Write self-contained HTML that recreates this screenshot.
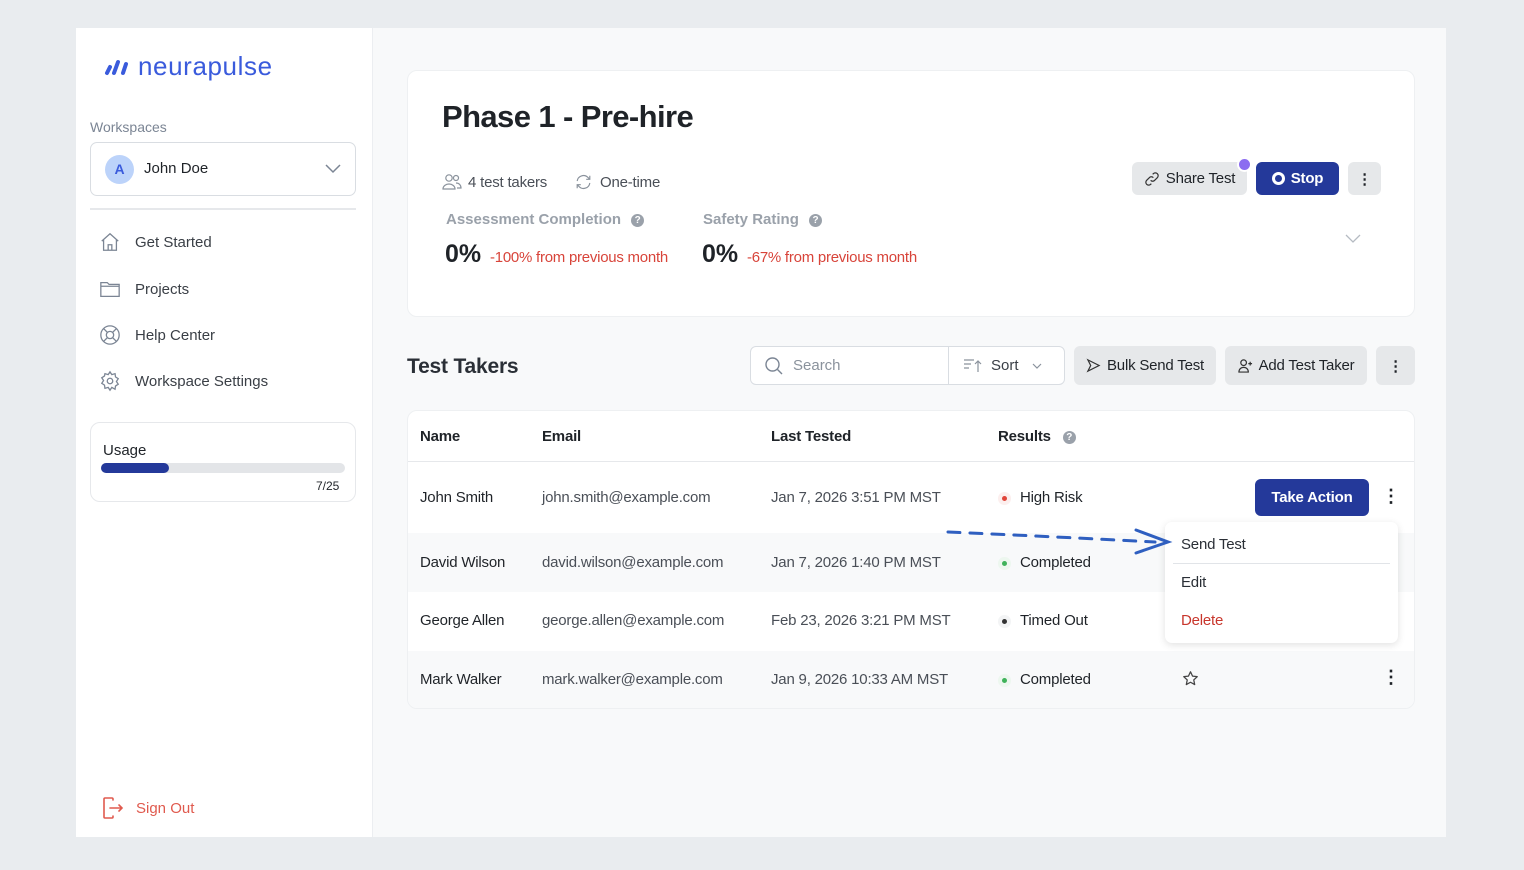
<!DOCTYPE html>
<html><head><meta charset="utf-8"><style>
*{margin:0;padding:0;box-sizing:border-box}
body{width:1524px;height:870px;background:#e9ecef;font-family:"Liberation Sans",Arial,sans-serif;position:relative;overflow:hidden;color:#1f2328}
.a{position:absolute}
.side{left:76px;top:28px;width:297px;height:809px;background:#fff;border-right:1px solid #eceef1}
.main{left:373px;top:28px;width:1073px;height:809px;background:#f8f9fa}
.card{background:#fff;border:1px solid #eef0f2;border-radius:10px}
.btn{background:#e6e8ea;border-radius:6px;font-size:15px;display:flex;align-items:center;justify-content:center;gap:6px;color:#1f2328;letter-spacing:-0.2px}
.nav{font-size:15px;color:#3a3f46;display:flex;align-items:center;gap:14px;left:99px}
.td{font-size:15px;color:#1f2328;letter-spacing:-0.2px}
.em{color:#4a4f57}
.dot{display:inline-block;width:5px;height:5px;border-radius:50%;margin-right:13px;vertical-align:middle;box-shadow:0 0 0 4px #f4f6f5}
</style></head><body>
<div class="a side"></div>
<div class="a main"></div>

<!-- logo -->
<svg class="a" style="left:104px;top:57px" width="28" height="20" viewBox="0 0 28 20"><g stroke="#3a5bdc" stroke-width="4" stroke-linecap="round"><line x1="3" y1="16" x2="6" y2="10"/><line x1="10" y1="16" x2="14" y2="5"/><line x1="19" y1="16" x2="22" y2="7"/></g></svg>
<div class="a" style="left:138px;top:51px;font-size:26px;color:#3a5bdc;font-weight:500;letter-spacing:0.6px">neurapulse</div>

<div class="a" style="left:90px;top:119px;font-size:14px;color:#7b8594">Workspaces</div>
<div class="a" style="left:90px;top:142px;width:266px;height:54px;border:1px solid #d9dde2;border-radius:7px"></div>
<div class="a" style="left:105px;top:155px;width:29px;height:29px;border-radius:50%;background:#bcd3fa;color:#3a5bdc;font-size:14px;font-weight:bold;text-align:center;line-height:29px">A</div>
<div class="a" style="left:144px;top:160px;font-size:15px">John Doe</div>
<svg class="a" style="left:325px;top:164px" width="16" height="10"><path d="M1 1l7 7 7-7" fill="none" stroke="#7b8594" stroke-width="1.5"/></svg>
<div class="a" style="left:90px;top:208px;width:266px;height:2px;background:#e6e8eb"></div>

<div class="a nav" style="top:231px"><svg width="22" height="22" viewBox="0 0 24 24" fill="none" stroke="#7b8594" stroke-width="1.4"><path d="M3 11l9-8 9 8M5 9v12h14V9M10 21v-6h4v6"/></svg>Get Started</div>
<div class="a nav" style="top:278px"><svg width="22" height="22" viewBox="0 0 24 24" fill="none" stroke="#7b8594" stroke-width="1.4"><path d="M2 5h7l2 2h11v13H2zM2 9h20"/></svg>Projects</div>
<div class="a nav" style="top:324px"><svg width="22" height="22" viewBox="0 0 24 24" fill="none" stroke="#7b8594" stroke-width="1.4"><circle cx="12" cy="12" r="10"/><circle cx="12" cy="12" r="4"/><path d="M5 5l4 4M19 5l-4 4M5 19l4-4M19 19l-4-4"/></svg>Help Center</div>
<div class="a nav" style="top:370px"><svg width="22" height="22" viewBox="0 0 24 24" fill="none" stroke="#7b8594" stroke-width="1.4"><circle cx="12" cy="12" r="3"/><path d="M12 2l2 3 3.5-1 .5 3.5 3 2-2 3 2 3-3 2-.5 3.5L14 19l-2 3-2-3-3.5 1L6 16.5l-3-2 2-3-2-3 3-2L6.5 4 10 5z"/></svg>Workspace Settings</div>

<div class="a card" style="left:90px;top:422px;width:266px;height:80px;border-color:#e6e8eb"></div>
<div class="a" style="left:103px;top:442px;font-size:15px">Usage</div>
<div class="a" style="left:101px;top:463px;width:244px;height:10px;border-radius:5px;background:#e3e5e8"></div>
<div class="a" style="left:101px;top:463px;width:68px;height:10px;border-radius:5px;background:#24399a"></div>
<div class="a" style="left:316px;top:479px;font-size:12px">7/25</div>

<svg class="a" style="left:101px;top:796px" width="24" height="24" viewBox="0 0 24 24" fill="none" stroke="#e05a4e" stroke-width="1.6" stroke-linecap="round"><path d="M12 4V3a1 1 0 0 0-1-1H4a1 1 0 0 0-1 1v18a1 1 0 0 0 1 1h7a1 1 0 0 0 1-1v-1M9 12h12M18 9l3 3-3 3"/></svg>
<div class="a" style="left:136px;top:800px;font-size:15px;color:#e05a4e">Sign Out</div>

<!-- top card -->
<div class="a card" style="left:407px;top:70px;width:1008px;height:247px"></div>
<div class="a" style="left:442px;top:99px;font-size:31px;font-weight:bold;letter-spacing:-0.6px">Phase 1 - Pre-hire</div>
<svg class="a" style="left:442px;top:173px" width="20" height="18" viewBox="0 0 20 18" fill="none" stroke="#8a929c" stroke-width="1.2"><circle cx="7" cy="5" r="3.2"/><path d="M1 16c0-3 3-5 6-5s6 2 6 5z"/><circle cx="14" cy="5" r="2.5"/><path d="M14 10c3 0 5 2 5 5h-4"/></svg>
<div class="a" style="left:468px;top:174px;font-size:15px;color:#4a4f57;letter-spacing:-0.2px">4 test takers</div>
<svg class="a" style="left:574px;top:173px" width="19" height="18" viewBox="0 0 20 20" fill="none" stroke="#8a929c" stroke-width="1.3"><path d="M3 9a7 7 0 0 1 12-4l2 2M17 11a7 7 0 0 1-12 4l-2-2M17 3v4h-4M3 17v-4h4"/></svg>
<div class="a" style="left:600px;top:174px;font-size:15px;color:#4a4f57;letter-spacing:-0.2px">One-time</div>
<div class="a" style="left:446px;top:211px;font-size:15px;font-weight:bold;color:#9aa1aa">Assessment Completion <span style="display:inline-block;width:13px;height:13px;border-radius:50%;background:#9aa1aa;color:#fff;font-size:10px;text-align:center;line-height:13px;margin-left:6px;vertical-align:1px">?</span></div>
<div class="a" style="left:703px;top:211px;font-size:15px;font-weight:bold;color:#9aa1aa">Safety Rating <span style="display:inline-block;width:13px;height:13px;border-radius:50%;background:#9aa1aa;color:#fff;font-size:10px;text-align:center;line-height:13px;margin-left:6px;vertical-align:1px">?</span></div>
<div class="a" style="left:445px;top:240px;font-size:25px;font-weight:bold">0%</div>
<div class="a" style="left:490px;top:249px;font-size:15px;color:#d8443a;letter-spacing:-0.25px">-100% from previous month</div>
<div class="a" style="left:702px;top:240px;font-size:25px;font-weight:bold">0%</div>
<div class="a" style="left:747px;top:249px;font-size:15px;color:#d8443a;letter-spacing:-0.25px">-67% from previous month</div>
<div class="a btn" style="left:1132px;top:162px;width:115px;height:33px"><svg width="16" height="16" viewBox="0 0 24 24" fill="none" stroke="#333" stroke-width="1.8"><path d="M10 14a4 4 0 0 0 6 0l4-4a4 4 0 0 0-6-6l-1 1M14 10a4 4 0 0 0-6 0l-4 4a4 4 0 0 0 6 6l1-1"/></svg>Share Test</div>
<div class="a" style="left:1237px;top:157px;width:15px;height:15px;border-radius:50%;background:#8b6cf0;border:2px solid #fff"></div>
<div class="a btn" style="left:1256px;top:162px;width:83px;height:33px;background:#24399a;color:#fff;font-weight:bold"><span style="display:inline-block;width:13px;height:13px;border-radius:50%;border:3.5px solid #fff"></span>Stop</div>
<div class="a btn" style="left:1348px;top:162px;width:33px;height:33px;font-weight:bold">⋮</div>
<svg class="a" style="left:1345px;top:234px" width="16" height="10"><path d="M1 1l7 7 7-7" fill="none" stroke="#b5bbc2" stroke-width="1.3"/></svg>

<!-- toolbar -->
<div class="a" style="left:407px;top:355px;font-size:21px;font-weight:bold;color:#2a2f36;letter-spacing:-0.2px">Test Takers</div>
<div class="a" style="left:750px;top:346px;width:315px;height:39px;background:#fff;border:1px solid #d9dde2;border-radius:6px"></div>
<div class="a" style="left:948px;top:347px;width:1px;height:37px;background:#d9dde2"></div>
<svg class="a" style="left:764px;top:356px" width="20" height="20" viewBox="0 0 20 20" fill="none" stroke="#7b8594" stroke-width="1.4"><circle cx="8.5" cy="8.5" r="6.5"/><path d="M13.5 13.5L18 18"/></svg>
<div class="a" style="left:793px;top:357px;font-size:15px;color:#8a929c">Search</div>
<svg class="a" style="left:963px;top:357px" width="20" height="16" viewBox="0 0 20 16" fill="none" stroke="#8a929c" stroke-width="1.2"><path d="M1 3h10M1 7h7M1 11h5M15 15V4M12 7l3-3 3 3"/></svg>
<div class="a" style="left:991px;top:357px;font-size:15px;color:#3a3f46">Sort</div>
<svg class="a" style="left:1032px;top:363px" width="10" height="7"><path d="M1 1l4 4 4-4" fill="none" stroke="#8a929c" stroke-width="1.2"/></svg>
<div class="a btn" style="left:1074px;top:346px;width:142px;height:39px"><svg width="15" height="15" viewBox="0 0 16 16" fill="none" stroke="#333" stroke-width="1.3"><path d="M2 2l12 6-12 6 3-6z"/></svg>Bulk Send Test</div>
<div class="a btn" style="left:1225px;top:346px;width:142px;height:39px"><svg width="15" height="15" viewBox="0 0 16 16" fill="none" stroke="#333" stroke-width="1.3"><circle cx="6" cy="5" r="3"/><path d="M1 15c0-3 2-5 5-5s5 2 5 5zM13 4v4M11 6h4"/></svg>Add Test Taker</div>
<div class="a btn" style="left:1376px;top:346px;width:39px;height:39px;font-weight:bold">⋮</div>

<!-- table -->
<div class="a card" style="left:407px;top:410px;width:1008px;height:299px;overflow:hidden">
 <div class="a" style="left:0;top:50px;width:100%;height:1px;background:#e6e8eb"></div>
 <div class="a" style="left:0;top:122px;width:100%;height:59px;background:#f8f9fa"></div>
 <div class="a" style="left:0;top:240px;width:100%;height:59px;background:#f8f9fa"></div>
</div>
<div class="a td" style="left:420px;top:428px;font-weight:bold">Name</div>
<div class="a td" style="left:542px;top:428px;font-weight:bold">Email</div>
<div class="a td" style="left:771px;top:428px;font-weight:bold">Last Tested</div>
<div class="a td" style="left:998px;top:428px;font-weight:bold">Results <span style="display:inline-block;width:13px;height:13px;border-radius:50%;background:#9aa1aa;color:#fff;font-size:10px;text-align:center;line-height:13px;margin-left:8px;vertical-align:1px">?</span></div>

<div class="a td" style="left:420px;top:489px">John Smith</div>
<div class="a td em" style="left:542px;top:489px">john.smith@example.com</div>
<div class="a td em" style="left:771px;top:489px">Jan 7, 2026 3:51 PM MST</div>
<div class="a td" style="left:1002px;top:489px"><span class="dot" style="background:#e0453a;box-shadow:0 0 0 4px #fcefee"></span>High Risk</div>

<div class="a td" style="left:420px;top:554px">David Wilson</div>
<div class="a td em" style="left:542px;top:554px">david.wilson@example.com</div>
<div class="a td em" style="left:771px;top:554px">Jan 7, 2026 1:40 PM MST</div>
<div class="a td" style="left:1002px;top:554px"><span class="dot" style="background:#3fb25a;box-shadow:0 0 0 4px #edf7ef"></span>Completed</div>

<div class="a td" style="left:420px;top:612px">George Allen</div>
<div class="a td em" style="left:542px;top:612px">george.allen@example.com</div>
<div class="a td em" style="left:771px;top:612px">Feb 23, 2026 3:21 PM MST</div>
<div class="a td" style="left:1002px;top:612px"><span class="dot" style="background:#333;box-shadow:0 0 0 4px #f3f4f5"></span>Timed Out</div>

<div class="a td" style="left:420px;top:671px">Mark Walker</div>
<div class="a td em" style="left:542px;top:671px">mark.walker@example.com</div>
<div class="a td em" style="left:771px;top:671px">Jan 9, 2026 10:33 AM MST</div>
<div class="a td" style="left:1002px;top:671px"><span class="dot" style="background:#3fb25a;box-shadow:0 0 0 4px #edf7ef"></span>Completed</div>
<svg class="a" style="left:1182px;top:670px" width="17" height="17" viewBox="0 0 24 24" fill="none" stroke="#444" stroke-width="1.8" stroke-linejoin="round"><path d="M12 2.5l2.9 6.1 6.6.8-4.9 4.6 1.3 6.6L12 17.3l-5.9 3.3 1.3-6.6-4.9-4.6 6.6-.8z"/></svg>
<div class="a" style="left:1382px;top:667px;font-size:18px;font-weight:bold">⋮</div>

<div class="a btn" style="left:1255px;top:479px;width:114px;height:37px;background:#24399a;color:#fff;font-weight:bold">Take Action</div>
<div class="a" style="left:1382px;top:486px;font-size:18px;font-weight:bold">⋮</div>

<!-- dropdown -->
<div class="a" style="left:1165px;top:522px;width:233px;height:121px;background:#fff;border-radius:7px;box-shadow:0 2px 8px rgba(0,0,0,0.12)"></div>
<div class="a" style="left:1173px;top:563px;width:217px;height:1px;background:#e1e4e8"></div>
<div class="a td" style="left:1181px;top:536px;color:#2a2f36">Send Test</div>
<div class="a td" style="left:1181px;top:574px;color:#2a2f36">Edit</div>
<div class="a td" style="left:1181px;top:612px;color:#c8362c">Delete</div>

<svg class="a" style="left:940px;top:522px" width="235" height="36" viewBox="0 0 235 36" fill="none" stroke="#2f5fc0" stroke-width="3" stroke-linecap="round"><path d="M8 10 Q100 14 215 20" stroke-dasharray="12 10"/><path d="M196 8 L228 20 L196 31"/></svg>
</body></html>
